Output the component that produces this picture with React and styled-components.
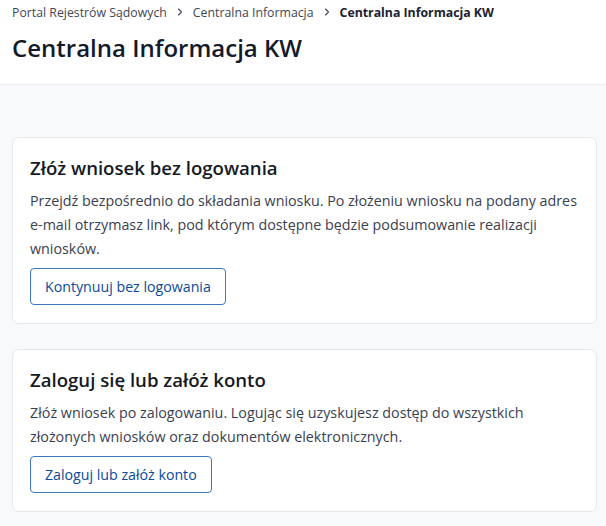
import React from 'react';
import styled, { createGlobalStyle } from 'styled-components';

const GlobalStyle = createGlobalStyle`
  html, body {
    margin: 0;
    padding: 0;
    background: #f8f9fb;
    font-family: "Open Sans", "Noto Sans", sans-serif;
    -webkit-font-smoothing: antialiased;
  }
  * { box-sizing: border-box; }
`;

const Header = styled.header`
  background: #fff;
  border-bottom: 1px solid #eceef2;
  padding: 4px 12px 0;
  height: 85px;
`;

const Crumbs = styled.nav`
  display: flex;
  align-items: center;
  gap: 9px;
  font-size: 12.3px;
  line-height: 18px;
  color: #3f4654;
`;

const Crumb = styled.span`
  color: ${p => (p.current ? '#1b2230' : '#3f4654')};
  font-weight: ${p => (p.current ? 700 : 400)};
`;

const Chevron = () => (
  <svg width="8" height="12" viewBox="0 0 8 12" fill="none">
    <path d="M2.5 2 5.5 5 2.5 8" stroke="#3f4654" strokeWidth="1.1" strokeLinecap="round" strokeLinejoin="round" />
  </svg>
);

const Title = styled.h1`
  margin: 9px 0 0;
  font-size: 24px;
  line-height: 34px;
  font-weight: 600;
  color: #121a2b;
`;

const Main = styled.main`
  display: flex;
  flex-direction: column;
  gap: 25px;
  padding: 52px 9px 16px 12px;
`;

const Card = styled.section`
  background: #fff;
  border: 1px solid #e6e8ec;
  border-radius: 7px;
  padding: 17px 17px 18px 17px;
`;

const CardTitle = styled.h2`
  margin: 0;
  font-size: 18.6px;
  line-height: 26px;
  font-weight: 600;
  color: #151a24;
`;

const CardText = styled.p`
  margin: 8px 0 0;
  font-size: 14.3px;
  line-height: 24px;
  color: #3a4150;
`;

const Button = styled.button`
  margin-top: 7px;
  height: 37px;
  padding: 0 14px;
  background: #fff;
  border: 1px solid #3d78bd;
  border-radius: 4px;
  font-family: inherit;
  font-size: 14.2px;
  font-weight: 500;
  color: #0a4a9b;
  cursor: pointer;
`;

export default function App() {
  return (
    <>
      <GlobalStyle />
      <Header>
        <Crumbs>
          <Crumb>Portal Rejestrów Sądowych</Crumb>
          <Chevron />
          <Crumb>Centralna Informacja</Crumb>
          <Chevron />
          <Crumb current>Centralna Informacja KW</Crumb>
        </Crumbs>
        <Title>Centralna Informacja KW</Title>
      </Header>
      <Main>
        <Card>
          <CardTitle>Złóż wniosek bez logowania</CardTitle>
          <CardText>
            Przejdź bezpośrednio do składania wniosku. Po złożeniu wniosku na podany adres e-mail
            otrzymasz link, pod którym dostępne będzie podsumowanie realizacji wniosków.
          </CardText>
          <Button>Kontynuuj bez logowania</Button>
        </Card>
        <Card>
          <CardTitle>Zaloguj się lub załóż konto</CardTitle>
          <CardText>
            Złóż wniosek po zalogowaniu. Logując się uzyskujesz dostęp do wszystkich złożonych
            wniosków oraz dokumentów elektronicznych.
          </CardText>
          <Button>Zaloguj lub załóż konto</Button>
        </Card>
      </Main>
    </>
  );
}
